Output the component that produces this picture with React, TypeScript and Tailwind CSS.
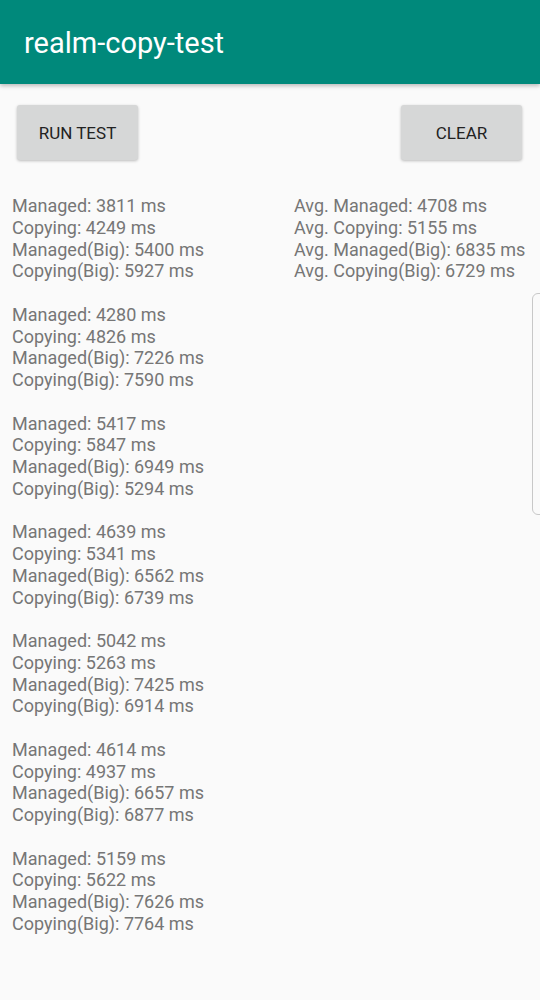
const runs = [
  [3811, 4249, 5400, 5927],
  [4280, 4826, 7226, 7590],
  [5417, 5847, 6949, 5294],
  [4639, 5341, 6562, 6739],
  [5042, 5263, 7425, 6914],
  [4614, 4937, 6657, 6877],
  [5159, 5622, 7626, 7764],
]

const labels = ['Managed', 'Copying', 'Managed(Big)', 'Copying(Big)']

export default function App() {
  return (
    <div className="relative w-[540px] h-[1000px] bg-[#fafafa] overflow-hidden font-['Roboto',sans-serif]">
      <div className="h-[84px] bg-[#00897b] flex items-center px-6 pt-[3px] shadow-[0_2px_4px_rgba(0,0,0,0.25)]">
        <h1 className="text-white text-[29px] leading-none">realm-copy-test</h1>
      </div>

      <div className="flex justify-between px-[17px] pt-[21px]">
        <button className="w-[121px] h-[55px] pt-[2px] bg-[#d6d7d7] rounded-[3px] shadow-[0_1px_3px_rgba(0,0,0,0.25)] text-[#222] text-[17px]">
          RUN TEST
        </button>
        <button className="w-[121px] h-[55px] pt-[2px] bg-[#d6d7d7] rounded-[3px] shadow-[0_1px_3px_rgba(0,0,0,0.25)] text-[#222] text-[17px] mr-[1px]">
          CLEAR
        </button>
      </div>

      <div className="flex pt-[35px] text-[#767676] text-[18px] leading-[21.75px]">
        <div className="w-[294px] pl-3">
          {runs.map((r, i) => (
            <div key={i} className="mb-[21.75px]">
              {r.map((v, j) => (
                <div key={j}>{labels[j]}: {v} ms</div>
              ))}
            </div>
          ))}
        </div>
        <div>
          <div>Avg. Managed: 4708 ms</div>
          <div>Avg. Copying: 5155 ms</div>
          <div>Avg. Managed(Big): 6835 ms</div>
          <div>Avg. Copying(Big): 6729 ms</div>
        </div>
      </div>

      <div className="absolute right-[-6px] top-[293px] w-[14px] h-[222px] rounded-[6px] border border-[#c8c8c8] bg-[#fafafa]" />
    </div>
  )
}
